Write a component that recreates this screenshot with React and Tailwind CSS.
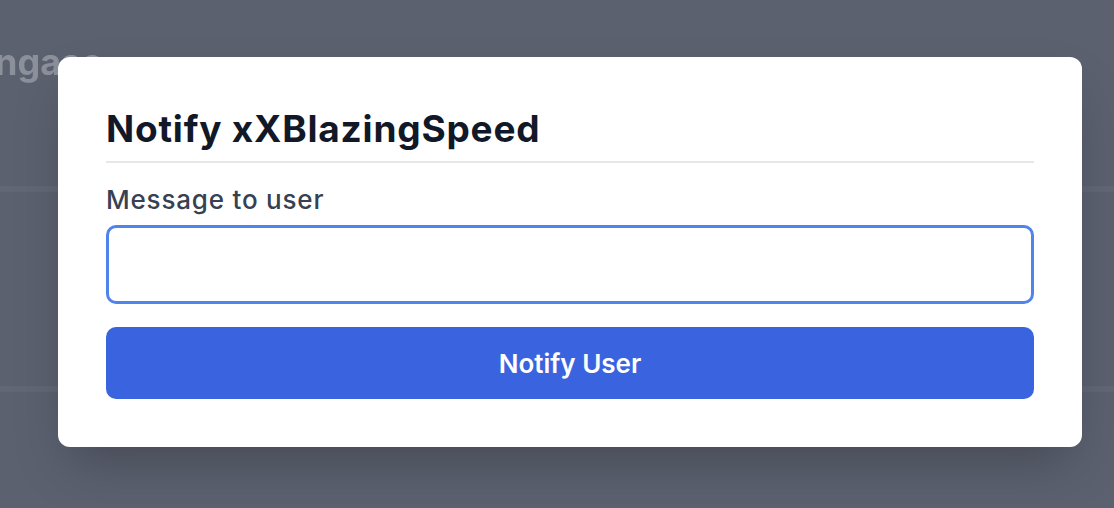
import React from 'react';

const NotifyModal = ({ username }) => {
  const [message, setMessage] = React.useState('');

  return (
    <div className="w-[1024px] h-[390px] bg-white rounded-xl shadow-2xl px-12 pt-[52px] pb-12 flex flex-col">
      <h2 className="text-[37px] leading-[40px] font-bold text-[#111827] tracking-[0.8px] pb-[12px] border-b-2 border-gray-200">
        Notify {username}
      </h2>

      <label className="mt-[21px] text-[26px] leading-8 font-medium tracking-[0.8px] text-[#374151]">
        Message to user
      </label>
      <input
        type="text"
        value={message}
        onChange={(e) => setMessage(e.target.value)}
        className="mt-[9px] h-[79px] shrink-0 w-full rounded-[10px] border-[3px] border-[#4f84ec] px-4 text-2xl outline-none"
      />

      <button className="mt-[23px] h-[72px] shrink-0 w-full rounded-[10px] bg-[#3a63e0] text-[26px] font-semibold text-white">
        Notify User
      </button>
    </div>
  );
};

const App = () => {
  return (
    <div className="relative h-[508px] w-[1114px] overflow-hidden bg-[#5c6170] font-['Inter',_'Liberation_Sans',_sans-serif]">
      {/* page behind the overlay */}
      <div className="flex flex-col">
        <div className="h-[186px] pt-[40px]">
          <h1 className="-ml-[5px] text-[36px] leading-[44px] font-bold text-[#8c909b] blur-[0.4px]">ngaso</h1>
        </div>
        <div className="h-[6px] bg-[#626776]" />
        <div className="h-[194px]" />
        <div className="h-[6px] bg-[#626776]" />
      </div>

      {/* overlay */}
      <div className="absolute inset-0 pl-[58px] pt-[57px]">
        <NotifyModal username="xXBlazingSpeed" />
      </div>
    </div>
  );
};

export default App;
